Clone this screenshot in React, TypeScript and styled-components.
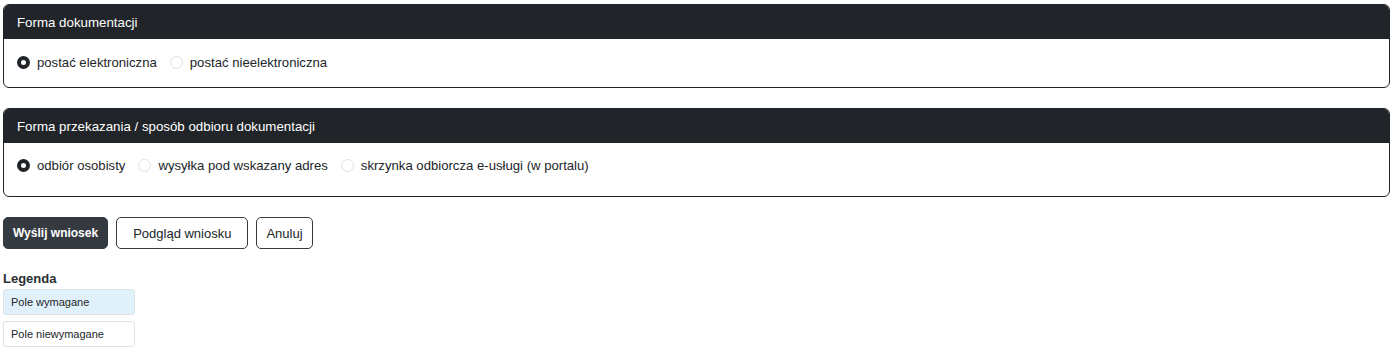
import styled, { createGlobalStyle } from 'styled-components';

const GlobalStyle = createGlobalStyle`
  body {
    margin: 0;
    background: #fff;
    font-family: "Segoe UI", "Liberation Sans", Arial, sans-serif;
    color: #212529;
  }
`;

const Page = styled.div`
  padding: 4px 2px 0 3px;
  display: flex;
  flex-direction: column;
`;

const Card = styled.section`
  border: 1px solid #212529;
  border-radius: 6px;
  overflow: hidden;
  margin-bottom: 20px;
`;

const CardHeader = styled.div`
  background: #212529;
  color: #fff;
  height: 34px;
  padding: 0 13px;
  display: flex;
  align-items: center;
  font-size: 13.3px;
`;

const CardBody = styled.div<{ tall?: boolean }>`
  display: flex;
  align-items: center;
  gap: 13px;
  padding: 0 13px;
  height: ${p => (p.tall ? '53px' : '48px')};
  padding-bottom: ${p => (p.tall ? '8px' : '2px')};
  box-sizing: border-box;
`;

const RadioLabel = styled.label`
  display: flex;
  align-items: center;
  gap: 7px;
  font-size: 13.15px;
  color: #212529;
`;

const RadioDot = styled.span<{ checked?: boolean }>`
  width: 13px;
  height: 13px;
  border-radius: 50%;
  box-sizing: border-box;
  border: ${p => (p.checked ? '4px solid #212529' : '1px solid #dee2e6')};
  background: #fff;
  flex-shrink: 0;
`;

const ButtonRow = styled.div`
  display: flex;
  gap: 8px;
  margin-bottom: 22px;
`;

const Button = styled.button<{ primary?: boolean; compact?: boolean }>`
  height: 32px;
  font-family: inherit;
  font-size: ${p => (p.primary ? '12px' : '13px')};
  border-radius: 5px;
  border: 1px solid #343a40;
  background: ${p => (p.primary ? '#343a40' : '#fff')};
  color: ${p => (p.primary ? '#fff' : '#212529')};
  font-weight: ${p => (p.primary ? 700 : 400)};
  padding: ${p => (p.primary ? '0 9px' : p.compact ? '0 9px' : '0 16px')};
`;

const LegendTitle = styled.div`
  font-size: 13px;
  font-weight: 700;
  color: #2b3035;
  margin-bottom: 3px;
`;

const LegendBox = styled.div<{ required?: boolean }>`
  width: 132px;
  height: 26px;
  box-sizing: border-box;
  border: 1px solid #dee2e6;
  border-radius: 3px;
  background: ${p => (p.required ? '#e1f1fb' : '#fff')};
  font-size: 11px;
  display: flex;
  align-items: center;
  padding: 0 7px;
  margin-bottom: 6px;
`;

const Radio = ({ label, checked }: { label: string; checked?: boolean }) => (
  <RadioLabel>
    <RadioDot checked={checked} />
    {label}
  </RadioLabel>
);

export default function App() {
  return (
    <>
      <GlobalStyle />
      <Page>
        <Card>
          <CardHeader>Forma dokumentacji</CardHeader>
          <CardBody>
            <Radio label="postać elektroniczna" checked />
            <Radio label="postać nieelektroniczna" />
          </CardBody>
        </Card>
        <Card>
          <CardHeader>Forma przekazania / sposób odbioru dokumentacji</CardHeader>
          <CardBody tall>
            <Radio label="odbiór osobisty" checked />
            <Radio label="wysyłka pod wskazany adres" />
            <Radio label="skrzynka odbiorcza e-usługi (w portalu)" />
          </CardBody>
        </Card>
        <ButtonRow>
          <Button primary>Wyślij wniosek</Button>
          <Button>Podgląd wniosku</Button>
          <Button compact>Anuluj</Button>
        </ButtonRow>
        <LegendTitle>Legenda</LegendTitle>
        <LegendBox required>Pole wymagane</LegendBox>
        <LegendBox>Pole niewymagane</LegendBox>
      </Page>
    </>
  );
}
